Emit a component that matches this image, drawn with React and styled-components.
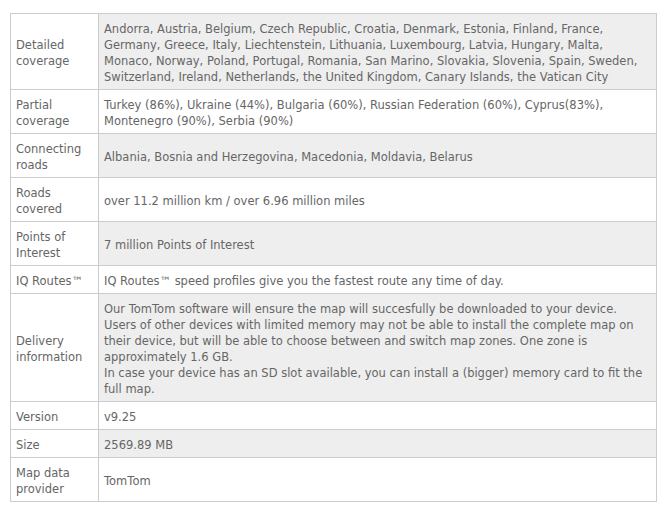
import React from 'react';
import styled, { createGlobalStyle } from 'styled-components';

const GlobalStyle = createGlobalStyle`
    body {
        margin: 0;
        background: #fff;
    }
`;

const rows = [
    {
        label: ['Detailed', 'coverage'],
        value: [
            'Andorra, Austria, Belgium, Czech Republic, Croatia, Denmark, Estonia, Finland, France,',
            'Germany, Greece, Italy, Liechtenstein, Lithuania, Luxembourg, Latvia, Hungary, Malta,',
            'Monaco, Norway, Poland, Portugal, Romania, San Marino, Slovakia, Slovenia, Spain, Sweden,',
            'Switzerland, Ireland, Netherlands, the United Kingdom, Canary Islands, the Vatican City',
        ],
    },
    {
        label: ['Partial', 'coverage'],
        value: [
            'Turkey (86%), Ukraine (44%), Bulgaria (60%), Russian Federation (60%), Cyprus(83%),',
            'Montenegro (90%), Serbia (90%)',
        ],
    },
    {
        label: ['Connecting', 'roads'],
        value: ['Albania, Bosnia and Herzegovina, Macedonia, Moldavia, Belarus'],
    },
    {
        label: ['Roads', 'covered'],
        value: ['over 11.2 million km / over 6.96 million miles'],
    },
    {
        label: ['Points of', 'Interest'],
        value: ['7 million Points of Interest'],
    },
    {
        label: ['IQ Routes™'],
        value: ['IQ Routes™ speed profiles give you the fastest route any time of day.'],
    },
    {
        label: ['Delivery', 'information'],
        value: [
            'Our TomTom software will ensure the map will succesfully be downloaded to your device.',
            'Users of other devices with limited memory may not be able to install the complete map on',
            'their device, but will be able to choose between and switch map zones. One zone is',
            'approximately 1.6 GB.',
            'In case your device has an SD slot available, you can install a (bigger) memory card to fit the',
            'full map.',
        ],
    },
    {
        label: ['Version'],
        value: ['v9.25'],
    },
    {
        label: ['Size'],
        value: ['2569.89 MB'],
    },
    {
        label: ['Map data', 'provider'],
        value: ['TomTom'],
    },
];

function Lines({ lines }) {
    return lines.map((line, i) => (
        <React.Fragment key={i}>
            {i > 0 && <br />}
            {line}
        </React.Fragment>
    ));
}

function App() {
    return (
        <Page>
            <GlobalStyle />
            <Table>
                <tbody>
                    {rows.map((row, i) => (
                        <tr key={i}>
                            <Label>
                                <Lines lines={row.label} />
                            </Label>
                            <Value $shaded={i % 2 === 0}>
                                <Lines lines={row.value} />
                            </Value>
                        </tr>
                    ))}
                </tbody>
            </Table>
        </Page>
    );
}

const Page = styled.div`
    padding: 13px 0 0 10px;
    width: 647px;
    font-family: "DejaVu Sans", Verdana, sans-serif;
`;

const Table = styled.table`
    width: 647px;
    border-collapse: collapse;
    border: 1px solid #cccccc;
    font-size: 11.5px;
    line-height: 16px;
    color: #666666;
`;

const Cell = styled.td`
    border: 1px solid #cccccc;
    padding: 7px 5px 4px 5px;
    vertical-align: middle;
    white-space: nowrap;
`;

const Label = styled(Cell)`
    width: 77px;
    background: #ffffff;
`;

const Value = styled(Cell)`
    background: ${(p) => (p.$shaded ? '#eeeeee' : '#ffffff')};
`;

export default App;
